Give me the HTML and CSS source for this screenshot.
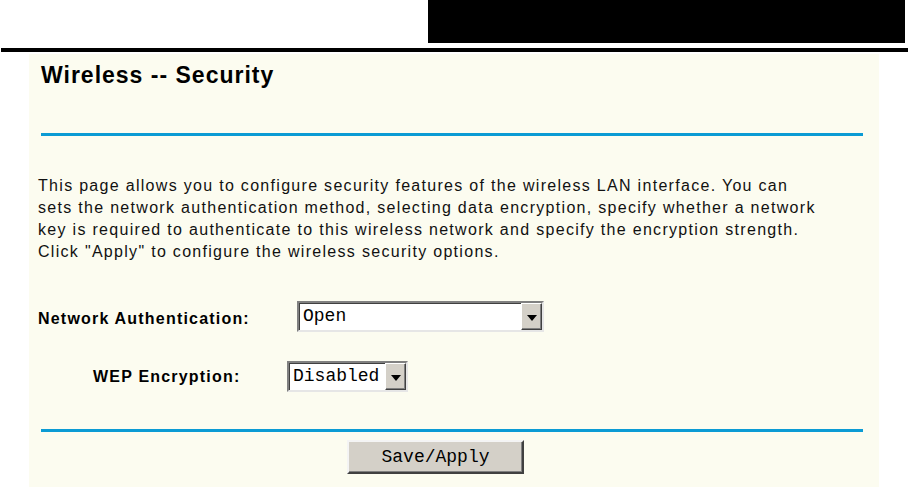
FILE: index.html
```html
<!DOCTYPE html>
<html lang="en">
<head>
  <meta charset="UTF-8">
  <title>Wireless -- Security</title>
  <link rel="stylesheet" href="styles.css">
</head>
<body>
  <!-- ページ上部のヘッダー帯 -->
  <header class="doc-header">
    <div class="header-block"></div>
  </header>
  <div class="header-rule"></div>

  <!-- 設定パネル -->
  <main class="panel">
    <h1 class="panel-title">Wireless -- Security</h1>
    <div class="blue-rule top-rule"></div>

    <p class="intro">
      This page allows you to configure security features of the wireless LAN interface. You can<br>
      sets the network authentication method, selecting data encryption, specify whether a network<br>
      key is required to authenticate to this wireless network and specify the encryption strength.<br>
      Click "Apply" to configure the wireless security options.
    </p>

    <div class="form-row row-auth">
      <label class="field-label">Network Authentication:</label>
      <div class="select-box select-wide">
        <span class="select-value">Open</span>
        <span class="select-arrow"><span class="triangle"></span></span>
      </div>
    </div>

    <div class="form-row row-wep">
      <label class="field-label">WEP Encryption:</label>
      <div class="select-box select-narrow">
        <span class="select-value">Disabled</span>
        <span class="select-arrow"><span class="triangle"></span></span>
      </div>
    </div>

    <div class="blue-rule bottom-rule"></div>

    <div class="actions">
      <button class="classic-btn" type="button">Save/Apply</button>
    </div>
  </main>
</body>
</html>
```

FILE: styles.css
```css
/* Reset */
* { margin: 0; padding: 0; box-sizing: border-box; }

html, body {
  background: #fff;
  color: #000;
  font-family: "Liberation Sans", Arial, sans-serif;
  height: 100%;
  overflow: hidden;
}

/* ヘッダー帯 */
.doc-header {
  display: flex;
  justify-content: flex-end;
  padding-right: 3px;
}

.header-block {
  width: 477px;
  height: 43px;
  background: #000;
}

.header-rule {
  height: 4px;
  margin: 5px 0 0 1px;
  background: #000;
}

/* パネル */
.panel {
  width: 850px;
  margin: 2px 0 0 29px;
  padding: 8px 0 13px 9px;
  background: #fcfcf0;
}

.panel-title {
  font-size: 23px;
  line-height: 26px;
  font-weight: bold;
  letter-spacing: 1px;
  margin-left: 3px;
}

.blue-rule {
  width: 822px;
  height: 3px;
  margin-left: 3px;
  background: #0b9bd4;
}

.top-rule { margin-top: 45px; }

/* 説明文 */
.intro {
  margin-top: 39px;
  font-size: 16px;
  line-height: 22px;
  letter-spacing: 1.3px;
  color: #111;
  white-space: nowrap;
}

/* フォーム行 */
.form-row {
  display: flex;
  align-items: center;
}

.field-label {
  font-size: 16px;
  font-weight: bold;
  letter-spacing: 1.2px;
  white-space: nowrap;
}

.row-auth {
  margin-top: 38px;
}

.row-auth .field-label {
  width: 259px;
  padding-top: 5px;
}

.row-wep {
  margin-top: 29px;
}

.row-wep .field-label {
  width: 249px;
  padding-left: 55px;
  padding-top: 1px;
}

/* セレクトボックス (Windows クラシック風) */
.select-box {
  display: flex;
  height: 31px;
  background: #fff;
  border: 2px solid;
  border-color: #808080 #e6e6e6 #e6e6e6 #808080;
  box-shadow: inset 1px 1px 0 #404040;
}

.select-wide { width: 247px; }
.select-narrow { width: 121px; }

.select-value {
  flex: 1;
  font-family: "Liberation Mono", "Courier New", monospace;
  font-size: 18px;
  line-height: 27px;
  padding-left: 4px;
  white-space: nowrap;
}

.select-arrow {
  width: 21px;
  display: flex;
  align-items: center;
  justify-content: center;
  background: #d4d0c8;
  border: 1px solid;
  border-color: #fff #404040 #404040 #fff;
  box-shadow: inset -1px -1px 0 #808080;
}

.triangle {
  width: 0;
  height: 0;
  border-left: 5px solid transparent;
  border-right: 5px solid transparent;
  border-top: 6px solid #000;
  margin-top: 2px;
}

.bottom-rule { margin-top: 37px; }

/* ボタン */
.actions {
  margin-top: 8px;
  padding-left: 309px;
}

.classic-btn {
  width: 177px;
  height: 34px;
  background: #d4d0c8;
  font-family: "Liberation Mono", "Courier New", monospace;
  font-size: 18px;
  color: #000;
  border: 2px solid;
  border-color: #f4f4f4 #404040 #404040 #f4f4f4;
  box-shadow: inset -1px -1px 0 #808080;
  cursor: pointer;
}
```
